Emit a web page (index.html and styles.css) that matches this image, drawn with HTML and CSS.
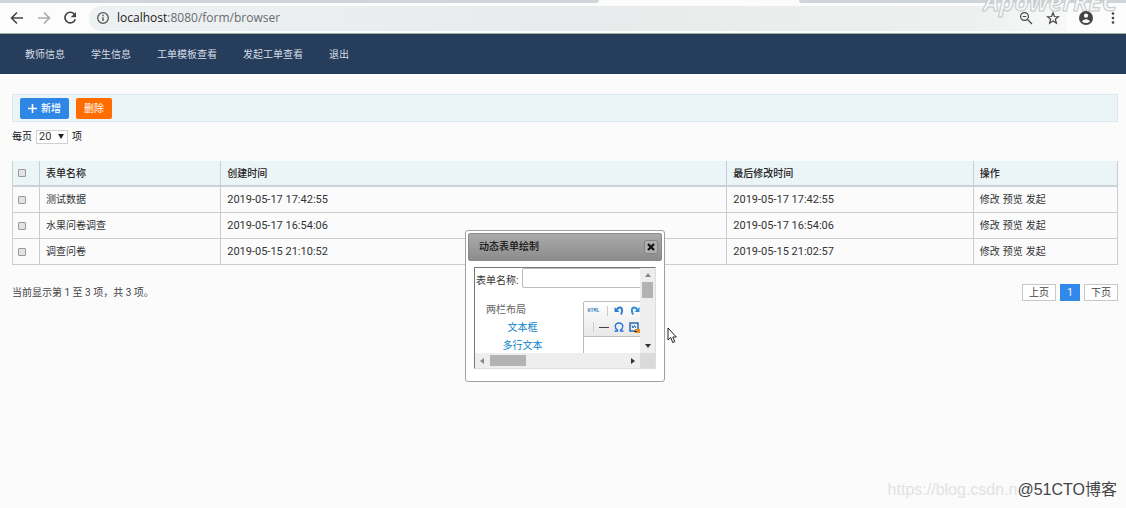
FILE: index.html
```html
<!DOCTYPE html>
<html lang="zh-CN">
<head>
<meta charset="utf-8">
<title>动态表单</title>
<link rel="stylesheet" href="styles.css">
</head>
<body>
<header class="browser">
  <div class="tabs"><span class="tab-left"></span><span class="tab-right"></span></div>
  <div class="toolbar">
    <button class="tool" aria-label="后退"><svg width="16" height="16" viewBox="0 0 16 16"><path d="M14 8H3M8 2.500L2.500 8L8 13.500" fill="none" stroke="#444" stroke-width="1.600"/></svg></button>
    <button class="tool" aria-label="前进"><svg width="16" height="16" viewBox="0 0 16 16"><path d="M2 8H13M8 2.500L13.500 8L8 13.500" fill="none" stroke="#aaa" stroke-width="1.600"/></svg></button>
    <button class="tool" aria-label="刷新"><svg width="16" height="16" viewBox="0 0 16 16"><path d="M12.600 4.500A5.300 5.300 0 1 0 13.300 9.200" fill="none" stroke="#444" stroke-width="1.700"/><path d="M14 2V7.300H8.700Z" fill="#444"/></svg></button>
    <div class="address">
      <svg width="14" height="14" viewBox="0 0 14 14"><circle cx="7" cy="7" r="5.300" fill="none" stroke="#555" stroke-width="1.300"/><path d="M7 6.200V10M7 3.800V5.200" stroke="#555" stroke-width="1.400"/></svg>
      <span class="url"><b>localhost</b>:8080/form/browser</span>
      <svg class="mag" width="14" height="14" viewBox="0 0 14 14"><circle cx="5.500" cy="5.500" r="3.900" fill="none" stroke="#444" stroke-width="1.200"/><path d="M8.500 8.500L13 13M3.800 5.500H7.200" stroke="#444" stroke-width="1.200"/></svg>
      <svg class="star" width="14" height="14" viewBox="0 0 14 14"><path d="M7 1.800L8.400 5.500L12.500 5.700L9.300 8.200L10.400 12.200L7 9.900L3.600 12.200L4.700 8.200L1.500 5.700L5.600 5.500Z" fill="none" stroke="#444" stroke-width="1.200"/></svg>
    </div>
    <svg class="user" width="16" height="16" viewBox="0 0 16 16"><circle cx="8" cy="8" r="7" fill="#444"/><circle cx="8" cy="5.700" r="2.100" fill="#fcfcfc"/><path d="M3.800 11.200Q8 7.400 12.200 11.200Q8 15 3.800 11.200Z" fill="#fcfcfc"/></svg>
    <svg class="dots" width="4" height="14" viewBox="0 0 4 14"><g fill="#444"><circle cx="2" cy="2.500" r="1.300"/><circle cx="2" cy="7" r="1.300"/><circle cx="2" cy="11.500" r="1.300"/></g></svg>
  </div>
  <div class="recorder">ApowerREC</div>
</header>
<nav class="nav">
  <a href="#">教师信息</a><a href="#">学生信息</a><a href="#">工单模板查看</a><a href="#">发起工单查看</a><a href="#">退出</a>
</nav>
<main class="page">
  <div class="actions">
    <button class="btn add"><svg width="9" height="9" viewBox="0 0 9 9"><path d="M4.500 0V9M0 4.500H9" stroke="#fff" stroke-width="1.600"/></svg>新增</button>
    <button class="btn del">删除</button>
  </div>
  <div class="length">
    <label for="size">每页</label>
    <span class="select"><select id="size"><option>20</option></select><svg width="6" height="5" viewBox="0 0 6 5"><path d="M0 0H6L3 5Z" fill="#222"/></svg></span>
    <span>项</span>
  </div>
  <table class="grid">
    <colgroup><col class="c-check"><col class="c-name"><col class="c-created"><col class="c-changed"><col class="c-ops"></colgroup>
    <thead><tr><th><input type="checkbox" aria-label="全选"></th><th>表单名称</th><th>创建时间</th><th>最后修改时间</th><th>操作</th></tr></thead>
    <tbody>
      <tr><td><input type="checkbox" aria-label="选择测试数据"></td><td>测试数据</td><td class="date">2019-05-17 17:42:55</td><td class="date">2019-05-17 17:42:55</td><td><div class="ops"><a href="#">修改</a><a href="#">预览</a><a href="#">发起</a></div></td></tr>
      <tr><td><input type="checkbox" aria-label="选择水果问卷调查"></td><td>水果问卷调查</td><td class="date">2019-05-17 16:54:06</td><td class="date">2019-05-17 16:54:06</td><td><div class="ops"><a href="#">修改</a><a href="#">预览</a><a href="#">发起</a></div></td></tr>
      <tr><td><input type="checkbox" aria-label="选择调查问卷"></td><td>调查问卷</td><td class="date">2019-05-15 21:10:52</td><td class="date">2019-05-15 21:02:57</td><td><div class="ops"><a href="#">修改</a><a href="#">预览</a><a href="#">发起</a></div></td></tr>
    </tbody>
  </table>
  <div class="footer">
    <span>当前显示第 1 至 3 项，共 3 项。</span>
    <div class="pager"><button>上页</button><button class="current">1</button><button>下页</button></div>
  </div>
</main>
<section class="dialog" role="dialog" aria-labelledby="dialog-title">
  <div class="titlebar"><span id="dialog-title">动态表单绘制</span>
    <button aria-label="关闭"><svg width="8" height="8" viewBox="0 0 8 8"><path d="M1 1L7 7M7 1L1 7" stroke="#111" stroke-width="2.200"/></svg></button></div>
  <div class="frame">
    <div class="view">
      <div class="field"><label for="form-name">表单名称:</label><input id="form-name" type="text"></div>
      <div class="designer">
        <div class="widgets"><span>两栏布局</span><a href="#">文本框</a><a href="#">多行文本</a></div>
        <div class="editor"><div class="tools">
          <span class="html">HTML</span><i></i>
          <svg width="10" height="10" viewBox="0 0 10 10"><path d="M.5 1V6H5.500Z" fill="#2f7fd0"/><path d="M2.500 4Q4 1 6.500 1.500Q9.500 3 7 8.500" fill="none" stroke="#2f7fd0" stroke-width="2"/></svg>
          <svg width="10" height="10" viewBox="0 0 10 10"><path d="M9.500 1V6H4.500Z" fill="#2f8fd8"/><path d="M7.500 4Q6 1 3.500 1.500Q.5 3 3 8.500" fill="none" stroke="#2f8fd8" stroke-width="2"/></svg>
          <i></i>
          <svg class="rule" width="10" height="10" viewBox="0 0 10 10"><path d="M0 5.500H10" stroke="#444"/></svg>
          <svg width="10" height="10" viewBox="0 0 10 10"><path d="M.5 9H3.500V8Q1 6.500 1.200 4Q1.700 1 5 1Q8.300 1 8.800 4Q9 6.500 6.500 8V9H9.500" fill="none" stroke="#2874dc" stroke-width="1.300"/></svg>
          <svg width="11" height="11" viewBox="0 0 11 11"><rect x="1" y="1" width="8" height="8" fill="#e8f2ff" stroke="#2260a8" stroke-width="1.400"/><path d="M3 3.500L4 6L5.500 3.500L7 6" fill="none" stroke="#2260a8"/><rect x="6" y="7" width="5" height="4" fill="#e58a20"/><path d="M5 9.500H8" stroke="#333"/></svg>
        </div></div>
      </div>
    </div>
    <div class="vbar"><svg width="6" height="4" viewBox="0 0 6 4"><path d="M0 4H6L3 0Z" fill="#888"/></svg><span></span><svg width="6" height="4" viewBox="0 0 6 4"><path d="M0 0H6L3 4Z" fill="#333"/></svg></div>
    <div class="hbar"><svg width="4" height="6" viewBox="0 0 4 6"><path d="M4 0V6L0 3Z" fill="#888"/></svg><span></span><svg width="4" height="6" viewBox="0 0 4 6"><path d="M0 0V6L4 3Z" fill="#333"/></svg></div>
    <div class="corner"></div>
  </div>
</section>
<svg class="cursor" width="10" height="17" viewBox="0 0 10 17"><path d="M1 1V13L3.800 10.500L5.700 15.500L7.800 14.600L5.800 10H9.300Z" fill="#fff" stroke="#222"/></svg>
<div class="marks"><span class="blog">https://blog.csdn.n</span><span class="cto">@51CTO博客</span></div>
</body>
</html>
```
FILE: styles.css
```css
* { box-sizing: border-box; }
body { margin: 0; min-height: 100vh; background: #fbfbfc; color: #333; font: 10px/14px Roboto, "Noto Sans CJK SC", sans-serif; }
button, input, select { font: inherit; color: inherit; }
a { color: inherit; text-decoration: none; }
svg { display: block; flex: none; }

.browser { position: relative; background: #fcfcfc; border-bottom: 1px solid #a4adb0; }
.tabs { display: flex; justify-content: space-between; height: 3px; }
.tab-left { width: 53.200%; background: #cfd5d8; border-radius: 0 0 4px 0; }
.tab-right { width: 29%; background: #cfd5d8; border-radius: 0 0 0 4px; }
.toolbar { display: flex; align-items: center; height: 30px; padding: 0 11px 0 9px; }
.tool { border: 0; background: none; padding: 0; margin-right: 11px; }
.tool:nth-child(2) { margin-right: 10px; }
.address { flex: 1; display: flex; align-items: center; gap: 13px; height: 25px; padding: 0 7px; background: linear-gradient(90deg, #eef1f1, #e8ebeb 50%, #eef0f0 90%, #f7f8f8); border-radius: 13px 0 0 13px; }
.url { flex: 1; margin-left: -6px; font: 12px/16px "Open Sans", sans-serif; color: #666c70; }
.url b { font-weight: 400; color: #222; }
.user { margin: 0 17px 0 11px; }
.mag, .star, .user, .dots { position: relative; z-index: 1; }
.recorder { position: absolute; right: 9px; top: -12px; font: italic 700 25px/26px "Open Sans", sans-serif; color: #f5f6f6; -webkit-text-stroke: 1px #c4c8ca; }

.nav { display: flex; align-items: center; gap: 26px; height: 40px; padding: 2px 25px 0; background: #263d5b; border-top: 1px solid #233f4d; border-bottom: 1px solid #1f3c5c; color: #d5dce5; }
.page { padding: 20px 8px 0 12px; }
.actions { display: flex; align-items: center; gap: 7px; height: 28px; padding: 0 7px; background: #ebf4f7; border: 1px solid #dde7ec; }
.btn { display: flex; align-items: center; gap: 4px; height: 21px; padding: 1px 8px 0; border: 0; border-radius: 2px; color: #fff; }
.add { background: #2f87e5; font-weight: 500; }
.del { background: #ff6c00; }
.length { display: flex; align-items: center; gap: 4px; margin-top: 8px; color: #111; }
.select { position: relative; }
.select select { display: block; appearance: none; width: 32px; height: 14px; padding: 0 2px; border: 1px solid #ccd2d4; border-radius: 0; background: #fff; color: #333; font: 11px/12px Roboto, sans-serif; }
.select svg { position: absolute; right: 4px; top: 4px; pointer-events: none; }

.grid { width: 100%; margin-top: 17px; table-layout: fixed; border-collapse: separate; border-spacing: 0; border-left: 1px solid #ccd0d2; }
.c-check { width: 27px; }
.c-name { width: 16.400%; }
.c-created { width: 45.800%; }
.c-changed { width: 22.300%; }
.grid th, .grid td { height: 26px; padding: 0 6px; text-align: left; border-right: 1px solid #c9cdcf; border-bottom: 1px solid #c9cdcf; }
.grid th:first-child, .grid td:first-child { padding: 0 5px; }
.grid th { padding-top: 1px; background: #ebf4f7; border-bottom: 2px solid #ccd3d4; font-weight: 500; color: #222; }
.grid .date { font-size: 11px; }
.grid input { appearance: none; display: block; width: 8px; height: 8px; margin: 0; border: 1px solid #999; border-radius: 1px; background: #e3e3e3; }
.ops { display: flex; gap: 3px; }
.footer { display: flex; justify-content: space-between; align-items: center; margin-top: 19px; color: #444; }
.pager { display: flex; gap: 4px; }
.pager button { height: 17px; padding: 0 6px; background: #fff; border: 1px solid #c8c8c8; line-height: 15px; }
.pager .current { width: 20px; background: #3289ec; border-color: #3289ec; color: #fff; }

.dialog { position: absolute; left: calc(50% - 98px); top: 230px; width: 200px; padding: 2px; background: #fff; border: 1px solid #a0a0a0; border-radius: 3px; }
.titlebar { display: flex; align-items: center; justify-content: space-between; height: 28px; padding: 0 3px 0 10px; border: 1px solid #8b8b8b; border-radius: 2px; background: linear-gradient(#aaa, #8c8c8c); font-weight: 500; color: #111; }
.titlebar button { display: grid; place-items: center; width: 14px; height: 14px; padding: 0; border: 1px solid #858585; border-radius: 2px; background: #b0b0b0; }
.frame { display: grid; grid-template-columns: 1fr 15px; grid-template-rows: 85px 15px; margin: 6px 6px 10px; border-top: 1px solid #777; border-left: 1px solid #777; border-right: 1px solid #ddd; border-bottom: 1px solid #ddd; }
.view { overflow: hidden; min-width: 0; padding-left: 1px; }
.field { display: flex; align-items: flex-end; gap: 4px; white-space: nowrap; }
.field input { flex: none; width: 150px; height: 20px; border: 1px solid #bbb; border-radius: 2px; background: #fff; }
.designer { display: flex; margin-top: 13px; }
.widgets { flex: none; display: grid; width: 107px; line-height: 18px; padding-right: 14px; justify-items: center; align-content: start; color: #666; }
.widgets span { justify-self: start; margin-left: 10px; }
.widgets a { color: #0782c6; }
.editor { flex: none; width: 80px; height: 80px; border: 1px solid #bbb; background: #fff; border-radius: 2px; }
.tools { display: grid; grid-template-columns: 13px 4px 10px 11px; grid-template-rows: 16px 16px; column-gap: 5px; place-items: center; height: 35px; padding: 1px 3px; background: linear-gradient(#fff, #e8e8e8); border-bottom: 1px solid #bbb; }
.tools i { width: 1px; height: 10px; background: #ccc; }
.tools .rule { justify-self: end; }
.html { font: 700 5px/8px "Liberation Mono", monospace; color: #3f7fc0; }
.vbar, .hbar { display: flex; align-items: center; justify-content: space-between; background: #eee; }
.vbar { flex-direction: column; padding: 5px 0; }
.vbar span { width: 11px; height: 16px; margin-bottom: 41px; background: #b3b3b3; }
.hbar { padding: 0 5px; }
.hbar span { width: 36px; height: 11px; margin-right: 100px; background: #b3b3b3; }
.corner { background: #dadada; }
.cursor { position: absolute; left: 59.200%; top: 327px; }
.marks { position: absolute; right: 9px; top: 481px; display: flex; font: 16px/18px "Liberation Sans", "Noto Sans CJK SC", sans-serif; }
.blog { color: #e2e2e2; }
.cto { color: #444; }
```
